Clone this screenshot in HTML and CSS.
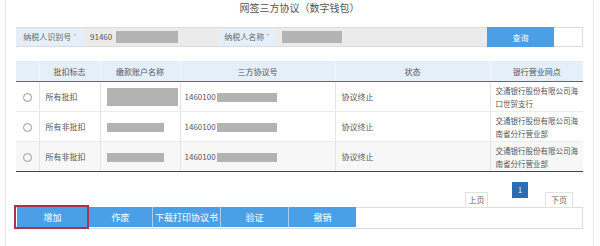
FILE: index.html
```html
<!DOCTYPE html>
<html lang="zh-CN">
<head>
    <meta charset="UTF-8">
    <meta name="viewport" content="width=device-width, initial-scale=1.0">
    <title>网签三方协议（数字钱包）</title>
    <link rel="stylesheet" href="styles.css">
</head>
<body>
    <div class="page">
        <div class="title">网签三方协议（数字钱包）</div>

        <div class="search">
            <div class="label wide">纳税人识别号 <span class="req">*</span></div>
            <div class="field f1">91460<span class="mask m-id"></span></div>
            <div class="label">纳税人名称 <span class="req">*</span></div>
            <div class="field f2"><span class="mask m-name"></span></div>
            <button class="btn-query">查询</button>
        </div>

        <table class="grid">
            <colgroup>
                <col style="width:23px">
                <col style="width:61px">
                <col style="width:80px">
                <col style="width:155px">
                <col style="width:155px">
                <col>
            </colgroup>
            <thead>
                <tr>
                    <th></th>
                    <th>批扣标志</th>
                    <th>缴款账户名称</th>
                    <th>三方协议号</th>
                    <th>状态</th>
                    <th>银行营业网点</th>
                </tr>
            </thead>
            <tbody>
                <tr>
                    <td class="radio"><span class="dot"></span></td>
                    <td>所有批扣</td>
                    <td><span class="mask big"></span></td>
                    <td>1460100<span class="mask no"></span></td>
                    <td>协议终止</td>
                    <td class="bank">交通银行股份有限公司海口世贸支行</td>
                </tr>
                <tr>
                    <td class="radio"><span class="dot"></span></td>
                    <td>所有非批扣</td>
                    <td><span class="mask small"></span></td>
                    <td>1460100<span class="mask no"></span></td>
                    <td>协议终止</td>
                    <td class="bank">交通银行股份有限公司海南省分行营业部</td>
                </tr>
                <tr class="alt">
                    <td class="radio"><span class="dot"></span></td>
                    <td>所有非批扣</td>
                    <td><span class="mask small"></span></td>
                    <td>1460100<span class="mask no"></span></td>
                    <td>协议终止</td>
                    <td class="bank">交通银行股份有限公司海南省分行营业部</td>
                </tr>
            </tbody>
        </table>

        <div class="pager">
            <span class="pg">上页</span>
            <span class="pg cur">1</span>
            <span class="pg">下页</span>
        </div>

        <div class="actions">
            <button class="act picked">增加</button>
            <button class="act a2">作废</button>
            <button class="act a3">下载打印协议书</button>
            <button class="act a3">验证</button>
            <button class="act a5">撤销</button>
        </div>
    </div>
</body>
</html>
```

FILE: styles.css
```css
body {
    margin: 0;
    background: #fff;
    font-family: "Noto Sans CJK SC", "Liberation Sans", sans-serif;
    color: #555;
}
.page {
    margin-left: 5px;
    width: 567px;
    height: 246px;
    padding: 0 10px;
    border-left: 1px solid #e8e8e8;
    border-right: 1px solid #ececec;
}
.title {
    height: 16px;
    line-height: 16px;
    margin-bottom: 11px;
    text-align: center;
    font-size: 10px;
    color: #555;
}

/* search bar */
.search {
    display: flex;
    height: 18px;
    border: 1px solid #dcdcdc;
    border-left: none;
}
.label {
    width: 58px;
    background: #e4effa;
    font-size: 8px;
    line-height: 18px;
    text-align: center;
    color: #666;
}
.label.wide {
    width: 68px;
}
.req {
    color: #e8a0a0;
}
.field {
    background: #ebebeb;
    font-size: 8px;
    line-height: 18px;
    padding-left: 6px;
    display: flex;
    align-items: center;
    color: #555;
}
.f1 {
    width: 128px;
}
.f2 {
    width: 205px;
}
.mask {
    display: inline-block;
    background: #b3b3b3;
}
.m-id {
    width: 62px;
    height: 12px;
    margin-left: 4px;
}
.m-name {
    width: 60px;
    height: 12px;
}
.btn-query {
    width: 67px;
    height: 20px;
    margin-top: -1px;
    border: none;
    background: #4a9fe6;
    color: #fff;
    font-family: inherit;
    font-size: 8px;
    padding: 0;
}

/* table */
.grid {
    margin-top: 14px;
    width: 567px;
    table-layout: fixed;
    border-collapse: collapse;
    font-size: 8px;
}
.grid th {
    height: 20px;
    padding: 0;
    background: #e4effa;
    border-left: 1px solid #f4f8fc;
    border-bottom: 1px solid #666;
    font-weight: normal;
    color: #555;
}
.grid td {
    height: 29px;
    padding: 0 4px 0 6px;
    border-left: 1px solid #e4e4e4;
    border-bottom: 1px solid #ececec;
    line-height: 13px;
    vertical-align: middle;
}
.grid th:first-child,
.grid td:first-child {
    border-left: none;
}
.grid td:nth-child(4) {
    padding-left: 4px;
}
.grid td.bank {
    padding: 0 2px 0 5px;
    font-size: 7.5px;
}
.grid tr.alt td {
    background: #f7f7f7;
    border-bottom: 1px solid #444;
}
.grid td.radio {
    padding: 0;
    text-align: center;
}
.dot {
    display: inline-block;
    width: 7px;
    height: 7px;
    border: 1px solid #999;
    border-radius: 50%;
    vertical-align: middle;
}
.mask.big {
    width: 71px;
    height: 18px;
    vertical-align: middle;
}
.mask.small {
    width: 57px;
    height: 9px;
    vertical-align: middle;
}
.mask.no {
    width: 60px;
    height: 9px;
    margin-left: 1px;
    vertical-align: middle;
}

/* pager */
.pager {
    display: flex;
    justify-content: flex-end;
    align-items: flex-start;
    height: 25px;
    margin-top: 10px;
    padding-right: 10px;
    position: relative;
    z-index: 1;
}
.pg {
    margin-top: 10px;
    width: 21px;
    height: 14px;
    border: 1px solid #e2e2e2;
    background: #fff;
    font-size: 8px;
    line-height: 14px;
    text-align: center;
    color: #666;
}
.pg.cur {
    margin: 0 17px 0 24px;
    width: 16px;
    height: 16px;
    border: none;
    background: #2c6db2;
    color: #fff;
    font-size: 7px;
    line-height: 16px;
}
.pg:last-child {
    width: 26px;
}

/* action buttons */
.actions {
    display: flex;
    height: 20px;
    border: 1px solid #dcdcdc;
    border-left: none;
    padding-left: 1px;
}
.act {
    height: 20px;
    margin-top: -1px;
    border: none;
    border-right: 1px solid #a9cff2;
    background: #4a9fe6;
    color: #fff;
    font-family: inherit;
    font-size: 9px;
    padding: 0;
    width: 68px;
}
.act.picked {
    width: 72px;
    position: relative;
}
.act.picked::after {
    content: "";
    position: absolute;
    left: -3px;
    right: -1px;
    top: -2px;
    bottom: -2px;
    border: 2px solid #a8344a;
}
.act.a2 {
    width: 64px;
}
.act.a5 {
    width: 67px;
    border-right: none;
}
```
